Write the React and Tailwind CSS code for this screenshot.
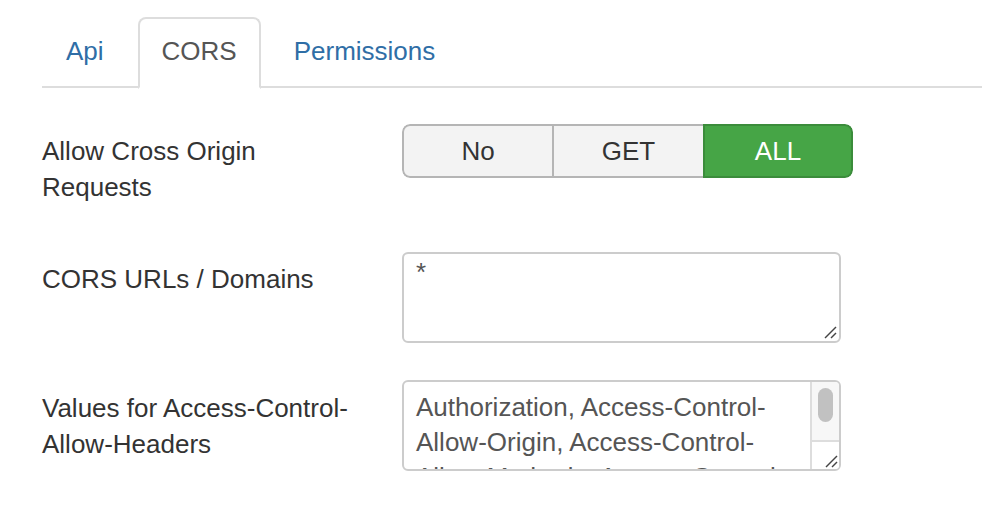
import React from 'react';

const font = { fontFamily: '"Liberation Sans", Arial, sans-serif' };

const Grip = () => (
  <svg width="14" height="14" viewBox="0 0 14 14" className="block">
    <line x1="13" y1="2" x2="2" y2="13" stroke="#444" strokeWidth="1.4" />
    <line x1="13" y1="8" x2="8" y2="13" stroke="#444" strokeWidth="1.4" />
  </svg>
);

export default function App() {
  return (
    <div className="w-[982px] h-[524px] bg-white pl-[42px] overflow-hidden text-[26px] leading-[36px] text-[#333]" style={font}>
      {/* tabs */}
      <ul className="flex border-b-2 border-[#ddd] pt-[17px] h-[88px]">
        <li className="mr-[10px] -mb-[2px]">
          <a className="block px-[22px] pt-[14px] pb-[18px] border-2 border-transparent text-[#2f6ea6]">Api</a>
        </li>
        <li className="mr-[9px] -mb-[2px]">
          <a className="block px-[22px] pt-[14px] pb-[18px] border-2 border-[#ddd] border-b-white bg-white rounded-t-[8px] text-[#555]">CORS</a>
        </li>
        <li className="-mb-[2px]">
          <a className="block px-[22px] pt-[14px] pb-[18px] border-2 border-transparent text-[#2f6ea6]">Permissions</a>
        </li>
      </ul>

      {/* row 1 */}
      <div className="flex mt-[36px] h-[128px]">
        <div className="w-[360px] pt-[9px]">Allow Cross Origin<br />Requests</div>
        <div className="flex h-[54px] w-[451px] rounded-[8px] overflow-hidden">
          <div className="w-[151px] flex items-center justify-center bg-[#f3f3f3] border-2 border-r border-[#b5b5b5] rounded-l-[8px]">No</div>
          <div className="w-[150px] flex items-center justify-center bg-[#f3f3f3] border-y-2 border-l border-[#b5b5b5]">GET</div>
          <div className="w-[150px] flex items-center justify-center bg-[#46a546] border-2 border-[#3b8c3b] rounded-r-[8px] text-white">ALL</div>
        </div>
      </div>

      {/* row 2 */}
      <div className="flex h-[128px]">
        <div className="w-[360px] pt-[9px]">CORS URLs / Domains</div>
        <div className="relative w-[439px] h-[91px] border-2 border-[#ccc] rounded-[6px] bg-white">
          <textarea
            readOnly
            defaultValue="*"
            className="block w-full h-full resize-none outline-none overflow-hidden px-3 pt-0 text-[#555] bg-transparent"
            style={font}
          />
          <div className="absolute right-[2px] bottom-[2px]"><Grip /></div>
        </div>
      </div>

      {/* row 3 */}
      <div className="flex">
        <div className="w-[360px] pt-[10px]">Values for Access-Control-<br />Allow-Headers</div>
        <div className="relative w-[439px] h-[91px] border-2 border-[#ccc] rounded-[6px] bg-white overflow-hidden">
          <textarea
            readOnly
            defaultValue="Authorization, Access-Control-Allow-Origin, Access-Control-Allow-Methods, Access-Control-Allow-Headers"
            className="block w-full h-full resize-none outline-none overflow-hidden pl-3 pr-[40px] pt-[8px] leading-[35px] text-[#555] bg-transparent"
            style={font}
          />
          <div className="absolute right-0 top-0 bottom-0 w-[29px] border-l-2 border-[#ddd] bg-[#f7f7f7] flex flex-col">
            <div className="flex-1 flex justify-center pt-[6px]">
              <div className="w-[15px] h-[34px] rounded-full bg-[#c1c1c1]" />
            </div>
            <div className="h-[29px] border-t-2 border-[#ddd] bg-white flex items-end justify-end pr-[1px] pb-[1px]">
              <Grip />
            </div>
          </div>
        </div>
      </div>
    </div>
  );
}
